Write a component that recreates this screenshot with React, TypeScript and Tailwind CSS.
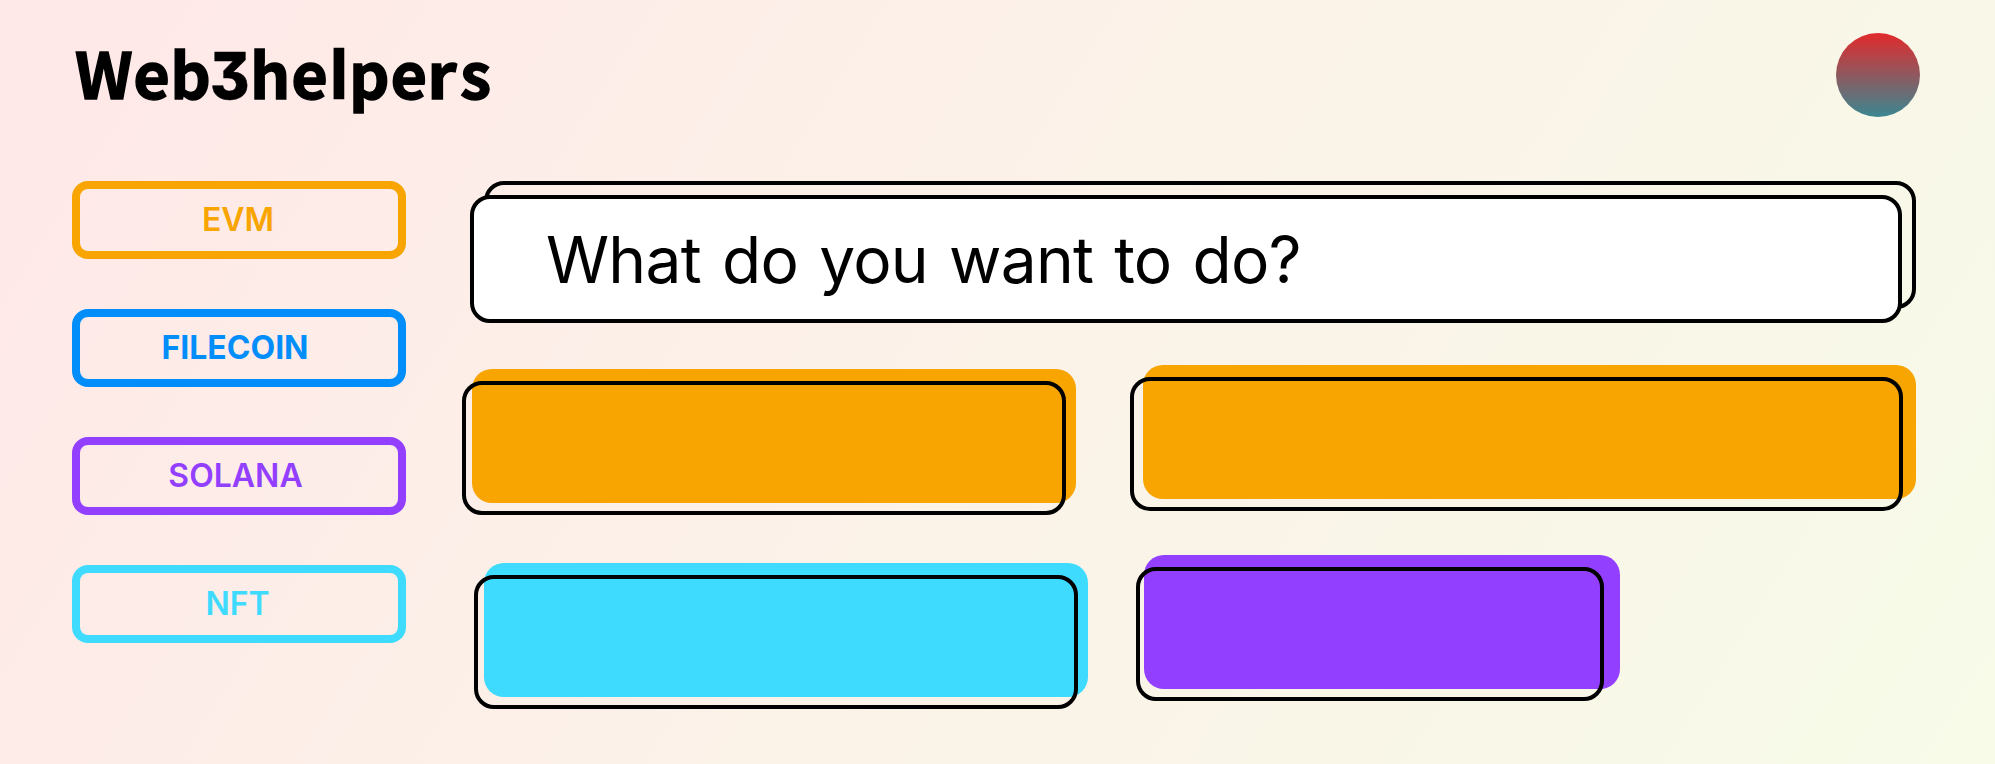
import React from "react";

const chains = [
  { label: "EVM", style: "border-[#f8a401] text-[#f8a401] font-semibold", shift: "-ml-[2px]" },
  { label: "FILECOIN", style: "border-[#018efb] text-[#018efb] font-bold", shift: "-ml-[8px]" },
  { label: "SOLANA", style: "border-[#933fff] text-[#933fff] font-semibold", shift: "-ml-[7px]" },
  { label: "NFT", style: "border-[#3edbff] text-[#3edbff] font-semibold", shift: "-ml-[3px]" },
];

function Card({ className, outline }: { className: string; outline: string }) {
  return (
    <div className={`relative h-[134px] shrink-0 rounded-[20px] ${className}`}>
      <div className={`absolute top-3 h-[134px] rounded-[20px] border-4 border-black ${outline}`} />
    </div>
  );
}

function Wordmark() {
  return (
    <h1 className="-mt-1 flex items-baseline pl-px font-['Noto_Sans_CJK_JP',sans-serif] text-[63px] leading-[86px] font-bold whitespace-nowrap [-webkit-text-stroke:1.4px_black]">
      <span className="w-[135px] tracking-[0.5px]">Web</span>
      <span className="w-[40px] origin-left scale-x-[0.94] font-['Inter',sans-serif] text-[64px] font-extrabold [-webkit-text-stroke:0.5px_black] [font-feature-settings:'cv09']">
        3
      </span>
      <span className="w-[79px] tracking-[1px]">he</span>
      <span className="w-5 font-['Noto_Sans',sans-serif] text-[67px] font-bold [-webkit-text-stroke:0.5px_black]">l</span>
      <span className="w-[78px] tracking-[1px]">pe</span>
      <span className="w-[33px] origin-left scale-x-[1.08]">r</span>
      <span>s</span>
    </h1>
  );
}

export default function App() {
  return (
    <div className="flex h-[764px] w-[1995px] flex-col overflow-hidden bg-[linear-gradient(122deg,#ffe8e8_0%,#fbf2e8_50%,#f7fbe8_100%)] font-['Inter',sans-serif] text-black">
      <header className="flex h-[181px] items-start justify-between pt-[33px] pr-[75px] pl-[74px]">
        <Wordmark />
        <div className="size-[84px] rounded-full bg-[linear-gradient(180deg,#e22a2b,#3b8792)]" />
      </header>
      <div className="flex pl-[72px]">
        <nav className="flex w-[334px] flex-col gap-[50px]">
          {chains.map((c) => (
            <button
              key={c.label}
              className={`flex h-[78px] items-center justify-center rounded-2xl border-8 text-[32px] leading-none ${c.style}`}
            >
              <span className={c.shift}>{c.label}</span>
            </button>
          ))}
        </nav>
        <main className="ml-[78px] flex w-[1432px] flex-col">
          <div className="relative h-32 rounded-[20px] border-4 border-black">
            <div className="absolute top-[10px] -left-[18px] flex h-32 w-[1432px] items-center rounded-[20px] border-4 border-black bg-white pt-[2px] pl-[72px]">
              <span className="text-[64px] leading-none tracking-[-0.7px] whitespace-nowrap [word-spacing:3.7px]">
                What do you want to do?
              </span>
            </div>
          </div>
          <div className="mt-14 -ml-3 flex items-start justify-between">
            <Card className="mt-1 w-[604px] bg-[#f8a401]" outline="-left-[10px] w-[604px]" />
            <Card className="w-[773px] bg-[#f8a401]" outline="-left-[13px] w-[773px]" />
          </div>
          <div className="mt-[52px] flex items-start gap-14">
            <Card className="mt-2 w-[604px] bg-[#3edbff]" outline="-left-[10px] w-[604px]" />
            <Card className="w-[476px] bg-[#933fff]" outline="-left-2 w-[468px]" />
          </div>
        </main>
      </div>
    </div>
  );
}
